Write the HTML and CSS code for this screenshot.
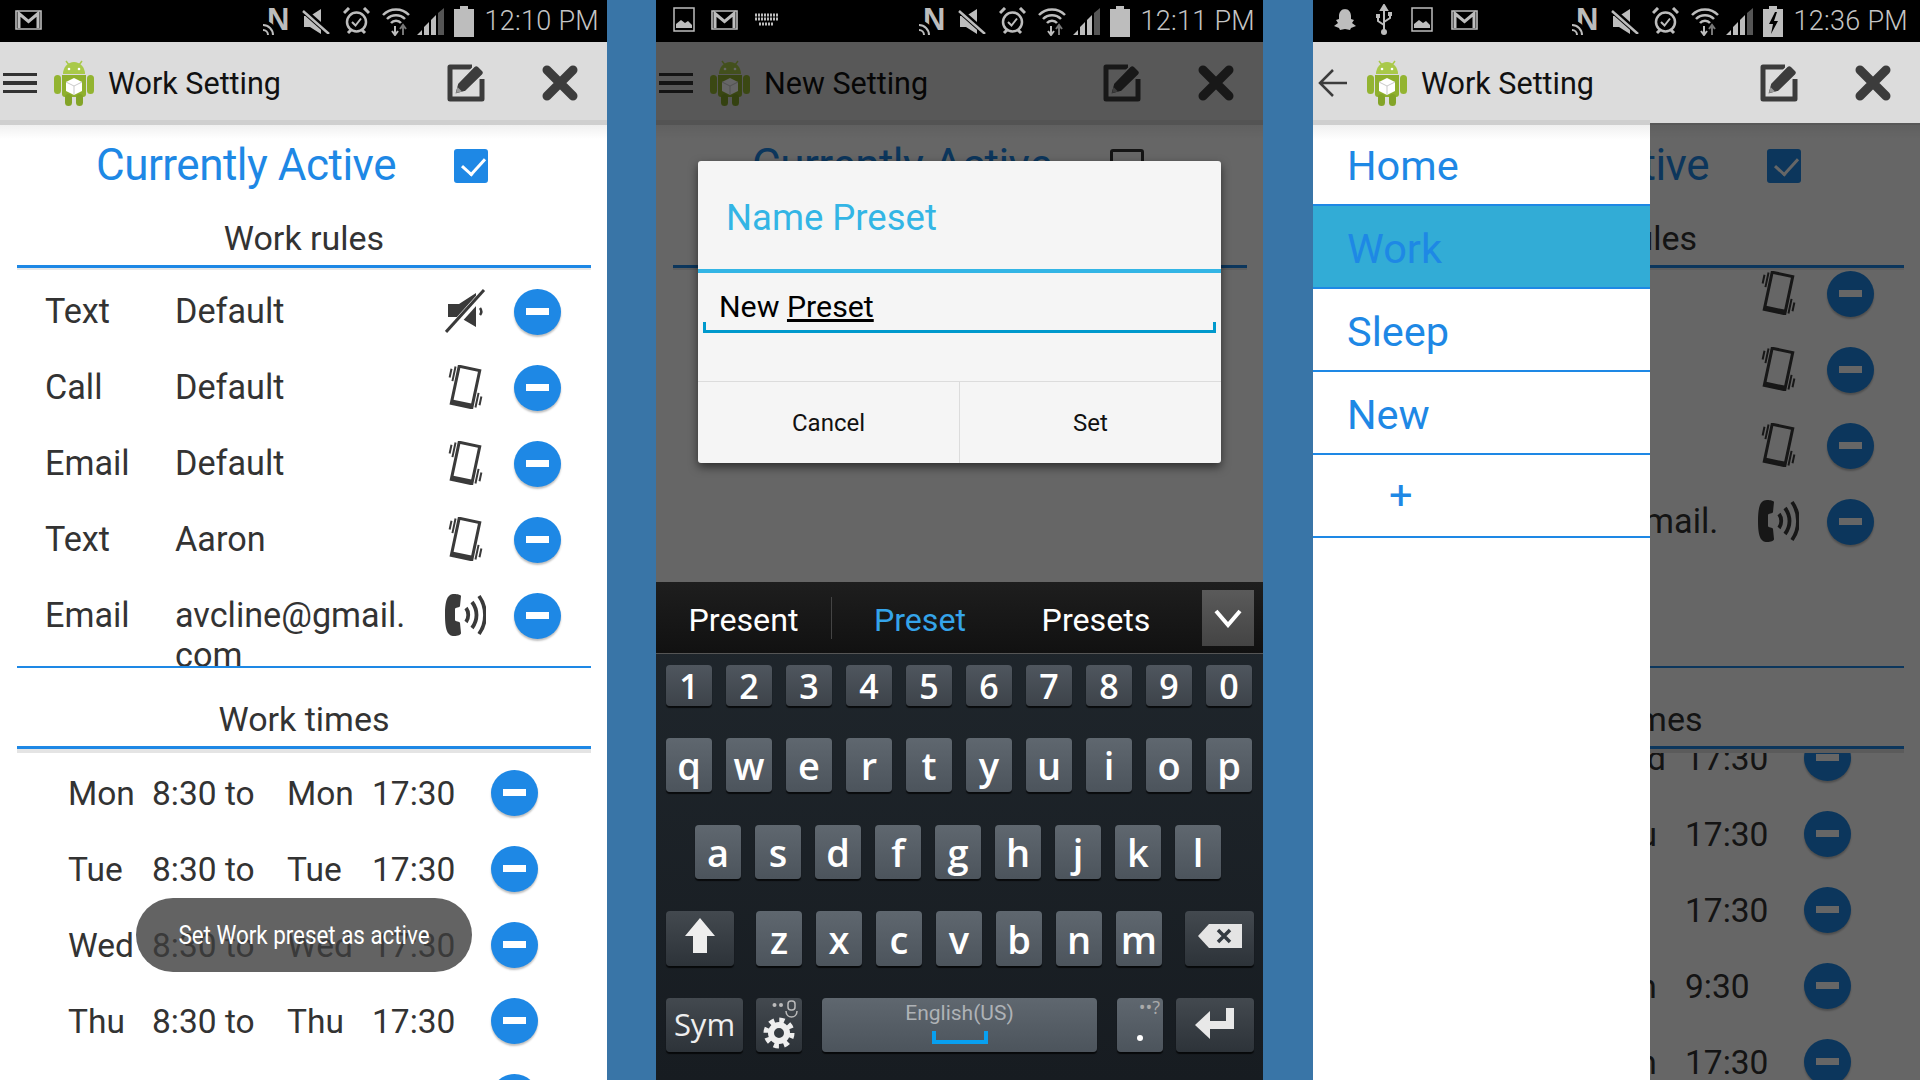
FILE: index.html
```html
<!DOCTYPE html>
<html lang="en">
<head>
    <meta charset="UTF-8">
    <title>Work Setting</title>
    <link rel="stylesheet" href="styles.css">
</head>
<body>
    <svg class="sprite" xmlns="http://www.w3.org/2000/svg">
        <symbol id="i-gmail" viewBox="0 0 27 20">
            <path d="M1 1h25v18H1z" fill="none" stroke="#bdbdbd" stroke-width="1.6"/>
            <path d="M4 18V3.500l9.500 8 9.500-8V18" fill="none" stroke="#bdbdbd" stroke-width="3"/>
        </symbol>
        <symbol id="i-image" viewBox="0 0 22 25">
            <path d="M1 1h20v23H1z" fill="none" stroke="#bdbdbd" stroke-width="1.500"/>
            <path d="M3 21v-4l5-4 4 3 3-2 4 4v3z" fill="#bdbdbd"/>
        </symbol>
        <symbol id="i-keys" viewBox="0 0 25 14">
            <path d="M1 2h23M1 6h23M5 11h15" stroke="#bdbdbd" stroke-width="3" stroke-dasharray="2 1" fill="none"/>
        </symbol>
        <symbol id="i-ghost" viewBox="0 0 25 26">
            <path d="M12.500 2c4.500 0 6.500 3.500 6.500 7v3l3 1-2 3 4 3-5 2-1 2-5-1-5 1-1-2-5-2 4-3-2-3 3-1V9c0-3.500 2-7 6.500-7z" fill="#bdbdbd"/>
        </symbol>
        <symbol id="i-usb" viewBox="0 0 18 32">
            <path d="M9 1l3 5H6zM9 5v23" stroke="#bdbdbd" stroke-width="2" fill="#bdbdbd"/>
            <circle cx="9" cy="28" r="3" fill="#bdbdbd"/>
            <path d="M9 21l-6-4v-4M9 18l6-4v-3" stroke="#bdbdbd" stroke-width="2" fill="none"/>
            <rect x="1" y="10" width="4" height="4" fill="#bdbdbd"/>
            <rect x="13" y="8" width="4" height="4" fill="#bdbdbd"/>
        </symbol>
        <symbol id="i-nfc" viewBox="0 0 26 30">
            <text x="4" y="24" font-family="Liberation Sans" font-weight="700" font-size="31" fill="#bdbdbd">N</text>
            <path d="M0 18a11 11 0 0 1 11 11" stroke="#000" stroke-width="7" fill="none"/>
            <path d="M0 19a10 10 0 0 1 10 10M0 24a5 5 0 0 1 5 5" stroke="#bdbdbd" stroke-width="2" fill="none"/>
        </symbol>
        <symbol id="i-mute" viewBox="0 0 28 25">
            <path d="M2 7h6l11-7v25l-11-7H2z" fill="#bdbdbd"/>
            <path d="M1 1l26 23" stroke="#000" stroke-width="6"/>
            <path d="M1 2l26 23" stroke="#bdbdbd" stroke-width="2.500"/>
        </symbol>
        <symbol id="i-alarm" viewBox="0 0 27 28">
            <circle cx="13.500" cy="15" r="9.500" fill="none" stroke="#bdbdbd" stroke-width="2.500"/>
            <path d="M9 15l3.500 3.500 5.500-7" fill="none" stroke="#bdbdbd" stroke-width="2"/>
            <path d="M1 6l5-5M26 6l-5-5M5 26l3-3M22 26l-3-3" stroke="#bdbdbd" stroke-width="3"/>
        </symbol>
        <symbol id="i-wifi" viewBox="0 0 28 30">
            <path d="M1 9a18 18 0 0 1 26 0M5 13a12.500 12.500 0 0 1 18 0M9 17a6.500 6.500 0 0 1 10 0" fill="none" stroke="#bdbdbd" stroke-width="2.500"/>
            <path d="M13 20v8M10 25l3 4 3-4" fill="none" stroke="#bdbdbd" stroke-width="2"/>
            <path d="M21 29v-9M18 23l3-4 3 4" fill="none" stroke="#777" stroke-width="2"/>
        </symbol>
        <symbol id="i-signal" viewBox="0 0 27 27">
            <path d="M0 27l5-5v5zM7 27V19l5-5v13z" fill="#bdbdbd"/>
            <path d="M14 27V12l5-5v20z" fill="#bdbdbd"/>
            <path d="M21 27V5l6-5v27z" fill="#555"/>
        </symbol>
        <symbol id="i-batt" viewBox="0 0 20 31">
            <path d="M6 0h8v3h6v28H0V3h6z" fill="#bdbdbd"/>
        </symbol>
        <symbol id="i-charge" viewBox="0 0 20 31">
            <path d="M6 0h8v3h6v28H0V3h6z" fill="#bdbdbd"/>
            <path d="M12 6l-6 12h4l-2 10 7-13h-4l3-9z" fill="#000"/>
        </symbol>
        <symbol id="i-android" viewBox="0 0 40 46">
            <path d="M9 14a11 12 0 0 1 22 0z" fill="#a9c94a"/>
            <path d="M12 1l3 4M28 1l-3 4" stroke="#a9c94a" stroke-width="1.500"/>
            <circle cx="15" cy="9" r="1.300" fill="#fff"/>
            <circle cx="25" cy="9" r="1.300" fill="#fff"/>
            <path d="M8 15h24v19a3 3 0 0 1-3 3H11a3 3 0 0 1-3-3z" fill="#8fb02e"/>
            <rect y="15" width="7" height="19" rx="3.500" fill="#93b431"/>
            <rect x="33" y="15" width="7" height="19" rx="3.500" fill="#93b431"/>
            <rect x="11" y="34" width="7" height="12" rx="3.500" fill="#83a428"/>
            <rect x="22" y="34" width="7" height="12" rx="3.500" fill="#83a428"/>
            <path d="M20 18l8 4v9l-8 4-8-4v-9z" fill="#fff"/>
            <path d="M12 22l8 4 8-4M20 26v9" fill="none" stroke="#c9c9c9" stroke-width="1"/>
        </symbol>
        <symbol id="i-edit" viewBox="0 0 38 38">
            <path d="M25 3H3v32h32V15" fill="none" stroke="#3c3c3c" stroke-width="5" stroke-linejoin="round"/>
            <path d="M7.500 30.500l3-11L27 2.500c1.500-1.500 3-1.500 4.500 0l4 4c1.500 1.500 1.500 3 0 4.500L18.500 27.500z" fill="#3c3c3c" stroke="#dcdcdc" stroke-width="1.500"/>
            <path d="M9 29l1.500-6 4.500 4.500z" fill="#9a9a9a"/>
        </symbol>
        <symbol id="i-close" viewBox="0 0 36 36">
            <path d="M5 5l26 26M31 5L5 31" stroke="#3c3c3c" stroke-width="9" stroke-linecap="round"/>
        </symbol>
        <symbol id="i-back" viewBox="0 0 30 30">
            <path d="M29 15H3M15 2L2 15l13 13" fill="none" stroke="#3c3c3c" stroke-width="2.500"/>
        </symbol>
        <symbol id="i-silent" viewBox="0 0 41 44">
            <path d="M3 15h11L31 4v34L14 28H3z" fill="#3a3a3a"/>
            <path d="M35 19c1.500 2 1.500 5 0 7" fill="none" stroke="#3a3a3a" stroke-width="2.500"/>
            <path d="M3 43L40 2" stroke="#fff" stroke-width="7"/>
            <path d="M1 43L39 1" stroke="#3a3a3a" stroke-width="3"/>
        </symbol>
        <symbol id="i-vibrate" viewBox="0 0 41 44">
            <g transform="rotate(12 20.500 22)">
                <rect x="10" y="3" width="21" height="38" fill="none" stroke="#3a3a3a" stroke-width="3"/>
                <rect x="10" y="37" width="21" height="4" fill="#3a3a3a"/>
                <path d="M6.500 4v15M3 7v9M34.500 25v15M38 28v9" stroke="#3a3a3a" stroke-width="2" fill="none"/>
            </g>
        </symbol>
        <symbol id="i-ring" viewBox="0 0 41 44">
            <path d="M9 1C3 1 0 6 0 22s3 21 9 21c4 0 7-1 7-3l-1-10c0-2-5-1-5-3V16c0-2 5-1 5-3l1-10c0-1-3-2-7-2z" fill="#3a3a3a"/>
            <path d="M21 15c3 4 3 10 0 14M27 9c6 8 6 18 0 26M34 3c8 11 8 27 0 38" fill="none" stroke="#3a3a3a" stroke-width="3.800"/>
        </symbol>
        <symbol id="i-chev" viewBox="0 0 30 20">
            <path d="M3 3l12 14L27 3" fill="none" stroke="#fff" stroke-width="4"/>
        </symbol>
        <symbol id="i-shift" viewBox="0 0 32 36">
            <path d="M16 1l15 18H23v17H9V19H1z" fill="#eee"/>
        </symbol>
        <symbol id="i-del" viewBox="0 0 46 26">
            <path d="M12 1h33v24H12L1 13z" fill="#e4e4e4"/>
            <path d="M21 7l12 12M33 7L21 19" stroke="#333a41" stroke-width="3.500"/>
        </symbol>
        <symbol id="i-enter" viewBox="0 0 42 36">
            <path d="M36 4v17H14" fill="none" stroke="#e8e8e8" stroke-width="8"/>
            <path d="M1 21l15-14v28z" fill="#e8e8e8"/>
        </symbol>
        <symbol id="i-gear" viewBox="0 0 32 32">
            <circle cx="16" cy="16" r="12.500" fill="none" stroke="#eee" stroke-width="6" stroke-dasharray="5 4.800"/>
            <circle cx="16" cy="16" r="8" fill="none" stroke="#eee" stroke-width="6"/>
        </symbol>
        <symbol id="i-mic" viewBox="0 0 26 20">
            <circle cx="2.500" cy="5" r="2" fill="#bbb"/>
            <circle cx="9" cy="5" r="2" fill="#bbb"/>
            <rect x="16" y="1" width="7" height="9" rx="3" fill="none" stroke="#bbb" stroke-width="1.500"/>
            <path d="M14 11c0 8 11 8 11 0" fill="none" stroke="#bbb" stroke-width="1.500"/>
        </symbol>
    </svg>

    <!-- first phone: work preset with toast -->
    <section class="phone">
        <div class="status">
            <div class="status-left"><svg class="st-gmail"><use href="#i-gmail"/></svg></div>
            <div class="status-right">
                <svg class="st-nfc"><use href="#i-nfc"/></svg>
                <svg class="st-mute"><use href="#i-mute"/></svg>
                <svg class="st-alarm"><use href="#i-alarm"/></svg>
                <svg class="st-wifi"><use href="#i-wifi"/></svg>
                <svg class="st-signal"><use href="#i-signal"/></svg>
                <svg class="st-batt"><use href="#i-batt"/></svg>
                <span class="clock">12:10 PM</span>
            </div>
        </div>
        <div class="action-bar">
            <div class="hamburger"><i></i><i></i><i></i></div>
            <svg class="logo"><use href="#i-android"/></svg>
            <div class="bar-title">Work Setting</div>
            <svg class="bar-edit"><use href="#i-edit"/></svg>
            <svg class="bar-close"><use href="#i-close"/></svg>
        </div>
        <div class="active-row">
            <span class="active-label">Currently Active</span>
            <span class="check on"></span>
        </div>
        <div class="section-title">Work rules</div>
        <div class="rule-list">
            <div class="rule-row"><span>Text</span><span>Default</span><svg class="rule-icon"><use href="#i-silent"/></svg><span class="minus"></span></div>
            <div class="rule-row"><span>Call</span><span>Default</span><svg class="rule-icon"><use href="#i-vibrate"/></svg><span class="minus"></span></div>
            <div class="rule-row"><span>Email</span><span>Default</span><svg class="rule-icon"><use href="#i-vibrate"/></svg><span class="minus"></span></div>
            <div class="rule-row"><span>Text</span><span>Aaron</span><svg class="rule-icon"><use href="#i-vibrate"/></svg><span class="minus"></span></div>
            <div class="rule-row"><span>Email</span><span>avcline@gmail.<br>com</span><svg class="rule-icon"><use href="#i-ring"/></svg><span class="minus"></span></div>
        </div>
        <div class="section-title times-title">Work times</div>
        <div class="time-list">
            <div class="time-row"><span>Mon</span><span>8:30 to</span><span>Mon</span><span>17:30</span><span class="minus"></span></div>
            <div class="time-row"><span>Tue</span><span>8:30 to</span><span>Tue</span><span>17:30</span><span class="minus"></span></div>
            <div class="time-row"><span>Wed</span><span>8:30 to</span><span>Wed</span><span>17:30</span><span class="minus"></span></div>
            <div class="time-row"><span>Thu</span><span>8:30 to</span><span>Thu</span><span>17:30</span><span class="minus"></span></div>
            <div class="time-row"><span>Fri</span><span>8:30 to</span><span>Fri</span><span>17:30</span><span class="minus"></span></div>
        </div>
        <div class="toast"><span class="toast-text">Set Work preset as active</span></div>
    </section>

    <!-- second phone: name dialog and keyboard -->
    <section class="phone">
        <div class="status">
            <div class="status-left left-three">
                <svg class="st-image"><use href="#i-image"/></svg>
                <svg class="st-gmail"><use href="#i-gmail"/></svg>
                <svg class="st-keys"><use href="#i-keys"/></svg>
            </div>
            <div class="status-right">
                <svg class="st-nfc"><use href="#i-nfc"/></svg>
                <svg class="st-mute"><use href="#i-mute"/></svg>
                <svg class="st-alarm"><use href="#i-alarm"/></svg>
                <svg class="st-wifi"><use href="#i-wifi"/></svg>
                <svg class="st-signal"><use href="#i-signal"/></svg>
                <svg class="st-batt"><use href="#i-batt"/></svg>
                <span class="clock">12:11 PM</span>
            </div>
        </div>
        <div class="action-bar">
            <div class="hamburger"><i></i><i></i><i></i></div>
            <svg class="logo"><use href="#i-android"/></svg>
            <div class="bar-title">New Setting</div>
            <svg class="bar-edit"><use href="#i-edit"/></svg>
            <svg class="bar-close"><use href="#i-close"/></svg>
        </div>
        <div class="active-row">
            <span class="active-label">Currently Active</span>
            <span class="check"></span>
        </div>
        <div class="section-title">New rules</div>
        <div class="dim dim-all"></div>
        <div class="dialog">
            <div class="dialog-head">Name Preset</div>
            <div class="dialog-body">
                <div class="dialog-input">New <u>Preset</u></div>
            </div>
            <div class="dialog-foot">
                <div class="dialog-btn">Cancel</div>
                <div class="dialog-btn">Set</div>
            </div>
        </div>
        <div class="keyboard">
            <div class="suggest">
                <div class="word divided">Present</div>
                <div class="word picked">Preset</div>
                <div class="word">Presets</div>
                <div class="suggest-more"><svg class="chev"><use href="#i-chev"/></svg></div>
            </div>
            <div class="key-rows">
                <div class="key-row nums">
                    <div class="key">1</div><div class="key">2</div><div class="key">3</div><div class="key">4</div><div class="key">5</div><div class="key">6</div><div class="key">7</div><div class="key">8</div><div class="key">9</div><div class="key">0</div>
                </div>
                <div class="key-row">
                    <div class="key">q</div><div class="key">w</div><div class="key">e</div><div class="key">r</div><div class="key">t</div><div class="key">y</div><div class="key">u</div><div class="key">i</div><div class="key">o</div><div class="key">p</div>
                </div>
                <div class="key-row row-home">
                    <div class="key">a</div><div class="key">s</div><div class="key">d</div><div class="key">f</div><div class="key">g</div><div class="key">h</div><div class="key">j</div><div class="key">k</div><div class="key">l</div>
                </div>
                <div class="key-row row-shift">
                    <div class="key dark k-shift"><svg class="kic-shift"><use href="#i-shift"/></svg></div>
                    <div class="key">z</div><div class="key">x</div><div class="key">c</div><div class="key">v</div><div class="key">b</div><div class="key">n</div><div class="key">m</div>
                    <div class="key dark k-del"><svg class="kic-del"><use href="#i-del"/></svg></div>
                </div>
                <div class="key-row row-space">
                    <div class="key dark k-sym">Sym</div>
                    <div class="key dark k-gear">
                        <svg class="kic-mic"><use href="#i-mic"/></svg>
                        <svg class="kic-gear"><use href="#i-gear"/></svg>
                    </div>
                    <div class="key k-space">
                        <span class="space-lang">English(US)</span>
                        <span class="space-mark"></span>
                    </div>
                    <div class="key k-dot"><span class="dot-hint">••?</span><span class="dot-mark"></span></div>
                    <div class="key dark k-enter"><svg class="kic-enter"><use href="#i-enter"/></svg></div>
                </div>
            </div>
        </div>
    </section>

    <!-- third phone: navigation drawer open -->
    <section class="phone drawer-open">
        <div class="status">
            <div class="status-left left-four">
                <svg class="st-ghost"><use href="#i-ghost"/></svg>
                <svg class="st-usb"><use href="#i-usb"/></svg>
                <svg class="st-image"><use href="#i-image"/></svg>
                <svg class="st-gmail"><use href="#i-gmail"/></svg>
            </div>
            <div class="status-right">
                <svg class="st-nfc"><use href="#i-nfc"/></svg>
                <svg class="st-mute"><use href="#i-mute"/></svg>
                <svg class="st-alarm"><use href="#i-alarm"/></svg>
                <svg class="st-wifi"><use href="#i-wifi"/></svg>
                <svg class="st-signal"><use href="#i-signal"/></svg>
                <svg class="st-batt"><use href="#i-charge"/></svg>
                <span class="clock">12:36 PM</span>
            </div>
        </div>
        <div class="action-bar">
            <svg class="back"><use href="#i-back"/></svg>
            <svg class="logo"><use href="#i-android"/></svg>
            <div class="bar-title">Work Setting</div>
            <svg class="bar-edit"><use href="#i-edit"/></svg>
            <svg class="bar-close"><use href="#i-close"/></svg>
        </div>
        <div class="active-row">
            <span class="active-label">Currently Active</span>
            <span class="check on"></span>
        </div>
        <div class="section-title">Work rules</div>
        <div class="rule-list scrolled">
            <div class="rule-row"><span>Call</span><span>Default</span><svg class="rule-icon"><use href="#i-vibrate"/></svg><span class="minus"></span></div>
            <div class="rule-row"><span>Email</span><span>Default</span><svg class="rule-icon"><use href="#i-vibrate"/></svg><span class="minus"></span></div>
            <div class="rule-row"><span>Text</span><span>Aaron</span><svg class="rule-icon"><use href="#i-vibrate"/></svg><span class="minus"></span></div>
            <div class="rule-row"><span>Email</span><span>avcline@gmail.<br>com</span><svg class="rule-icon"><use href="#i-ring"/></svg><span class="minus"></span></div>
        </div>
        <div class="section-title times-title">Work times</div>
        <div class="time-list scrolled">
            <div class="time-row"><span>Wed</span><span>8:30 to</span><span>Wed</span><span>17:30</span><span class="minus"></span></div>
            <div class="time-row"><span>Thu</span><span>8:30 to</span><span>Thu</span><span>17:30</span><span class="minus"></span></div>
            <div class="time-row"><span>Fri</span><span>8:30 to</span><span>Fri</span><span>17:30</span><span class="minus"></span></div>
            <div class="time-row"><span>Sun</span><span>8:30 to</span><span>Sun</span><span>9:30</span><span class="minus"></span></div>
            <div class="time-row"><span>Sun</span><span>12:30 to</span><span>Sun</span><span>17:30</span><span class="minus"></span></div>
        </div>
        <div class="dim dim-below"></div>
        <nav class="drawer">
            <div class="drawer-item">Home</div>
            <div class="drawer-item current">Work</div>
            <div class="drawer-item">Sleep</div>
            <div class="drawer-item">New</div>
            <div class="drawer-item add">+</div>
        </nav>
    </section>
</body>
</html>
```

FILE: styles.css
```css
* {
    box-sizing: border-box;
}
html, body {
    height: 100%;
}
body {
    margin: 0;
    background: #3975a7;
    display: flex;
    gap: 49px;
    overflow: hidden;
    font-family: Roboto, "Liberation Sans", sans-serif;
    color: #333;
}
.sprite {
    position: absolute;
    width: 0;
    height: 0;
}
.phone {
    position: relative;
    flex: none;
    width: 607px;
    height: 1080px;
    background: #fff;
    overflow: hidden;
}
.phone.drawer-open {
    margin-left: auto;
}

/* status bar */
.status {
    position: relative;
    z-index: 5;
    height: 42px;
    background: #000;
    display: flex;
    justify-content: space-between;
    align-items: center;
}
.status-left {
    display: flex;
    align-items: center;
    padding-left: 15px;
    margin-top: -3px;
}
.left-three {
    padding-left: 17px;
    gap: 16px;
}
.left-four {
    padding-left: 19px;
    gap: 18px;
}
.status-right {
    display: flex;
    align-items: center;
    gap: 12px;
    padding-right: 8px;
}
.drawer-open .status-right {
    padding-right: 12px;
}
.st-gmail { width: 27px; height: 20px; }
.st-image { width: 22px; height: 25px; }
.st-keys { width: 25px; height: 14px; }
.st-ghost { width: 25px; height: 26px; }
.st-usb { width: 18px; height: 32px; }
.st-nfc { width: 26px; height: 30px; }
.st-mute { width: 28px; height: 25px; margin-left: 1px; }
.st-alarm { width: 27px; height: 28px; margin-left: 1px; }
.st-wifi { width: 28px; height: 30px; }
.st-signal { width: 27px; height: 27px; margin-left: -5px; }
.st-batt { width: 20px; height: 31px; margin-left: -2px; }
.clock {
    margin-left: -2px;
    font-size: 27px;
    font-weight: 300;
    color: #c4c4c4;
    letter-spacing: 0.3px;
    white-space: nowrap;
}

/* action bar */
.action-bar {
    position: relative;
    height: 83px;
    padding: 4px 0 0 3px;
    background: #dcdcdc;
    border-bottom: 5px solid #cfcfcf;
    display: flex;
    align-items: center;
}
.action-bar::after {
    content: "";
    position: absolute;
    left: 0;
    right: 0;
    top: 83px;
    height: 14px;
    background: linear-gradient(#f0f0f0, #fff);
}
.drawer-open .action-bar {
    border-bottom-color: #dcdcdc;
}
.hamburger {
    width: 34px;
    display: flex;
    flex-direction: column;
    gap: 5px;
}
.hamburger i {
    display: block;
    height: 3.500px;
    background: #333;
}
.back {
    width: 30px;
    height: 30px;
    margin: 0 2px;
}
.logo {
    width: 40px;
    height: 46px;
    margin-left: 17px;
}
.bar-title {
    margin-left: 14px;
    font-size: 30.500px;
    color: #111;
    width: 339px;
    white-space: nowrap;
}
.bar-edit {
    width: 38px;
    height: 38px;
}
.bar-close {
    width: 36px;
    height: 36px;
    margin-left: 57px;
}

/* top of the form */
.active-row {
    height: 80px;
    padding: 0 119px 0 96px;
    display: flex;
    align-items: center;
    justify-content: space-between;
}
.active-label {
    font-size: 44px;
    letter-spacing: -0.5px;
    color: #1e88e5;
}
.check {
    position: relative;
    width: 34px;
    height: 34px;
    border-radius: 3px;
    border: 3px solid #333;
    margin-top: 2px;
}
.check.on {
    background: #1e88e5;
    border-color: #1e88e5;
}
.check.on::after {
    content: "";
    position: absolute;
    left: 4px;
    top: 2px;
    width: 19px;
    height: 11px;
    border-left: 3px solid #fff;
    border-bottom: 3px solid #fff;
    transform: rotate(-48deg) translate(-1px, 3px);
}
.section-title {
    position: relative;
    height: 63px;
    margin: 0 16px 0 17px;
    padding-bottom: 7px;
    display: flex;
    align-items: flex-end;
    justify-content: center;
    font-size: 34px;
    border-bottom: 3px solid #1e88e5;
    box-shadow: 0 2px 0 #e8e8e8;
    background: #fff;
    z-index: 1;
}
.times-title {
    height: 81px;
    box-shadow: 0 4px 0 #e4e4e4;
}

/* rows */
.rule-list {
    position: relative;
    height: 400px;
    padding-top: 2px;
    overflow: hidden;
}
.rule-list::after {
    content: "";
    position: absolute;
    left: 17px;
    right: 16px;
    bottom: 0;
    height: 2px;
    background: #1e88e5;
}
.rule-row {
    height: 76px;
    padding: 21px 0 0 45px;
    display: grid;
    grid-template-columns: 130px 270px 69px 47px;
    align-items: start;
    font-size: 34.200px;
    line-height: 40px;
}
.rule-icon {
    width: 41px;
    height: 44px;
    margin-top: -2px;
}
.rule-list.scrolled {
    padding-top: 0;
}
.rule-list.scrolled .rule-row:first-child {
    margin-top: -16px;
}
.time-list {
    padding-top: 6px;
}
.time-list.scrolled {
    padding-top: 0;
}
.time-list.scrolled .time-row:first-child {
    margin-top: -29px;
}
.time-row {
    height: 76px;
    padding-left: 68px;
    display: grid;
    grid-template-columns: 84px 135px 85px 119px 47px;
    align-items: center;
    font-size: 33.500px;
    white-space: nowrap;
}
.minus {
    position: relative;
    width: 47px;
    height: 46px;
    border-radius: 50%;
    background: #1e88e5;
    box-shadow: 0 2px 2px rgba(0, 0, 0, 0.25);
}
.minus::after {
    content: "";
    position: absolute;
    left: 12px;
    top: 19px;
    width: 23px;
    height: 7px;
    background: #fff;
}
.rule-row .minus {
    margin-top: -2px;
}
.toast {
    position: absolute;
    left: 136px;
    top: 898px;
    width: 336px;
    height: 74px;
    border-radius: 37px;
    background: rgba(60, 60, 60, 0.8);
    color: #fff;
    display: flex;
    align-items: center;
    justify-content: center;
}
.toast-text {
    font-size: 26px;
    white-space: nowrap;
    transform: scaleX(0.86);
}

/* dim layers */
.dim {
    position: absolute;
    left: 0;
    right: 0;
    bottom: 0;
    background: rgba(0, 0, 0, 0.6);
    z-index: 2;
}
.dim-all {
    top: 42px;
}
.dim-below {
    top: 123px;
}

/* dialog */
.dialog {
    position: absolute;
    left: 42px;
    top: 161px;
    width: 523px;
    height: 302px;
    border-radius: 3px;
    background: #f5f5f5;
    box-shadow: 0 4px 10px rgba(0, 0, 0, 0.55);
    z-index: 3;
    display: flex;
    flex-direction: column;
}
.dialog-head {
    height: 112px;
    padding: 5px 0 0 28px;
    display: flex;
    align-items: center;
    font-size: 36.500px;
    color: #33b5e5;
    border-bottom: 4px solid #33b5e5;
}
.dialog-body {
    height: 108px;
    padding: 0 5px;
}
.dialog-input {
    position: relative;
    height: 60px;
    padding: 16px 0 0 16px;
    font-size: 30.300px;
    line-height: 35px;
    color: #000;
    border-bottom: 3px solid #0099cc;
}
.dialog-input::before,
.dialog-input::after {
    content: "";
    position: absolute;
    bottom: 0;
    width: 3px;
    height: 8px;
    background: #0099cc;
}
.dialog-input::before {
    left: 0;
}
.dialog-input::after {
    right: 0;
}
.dialog-foot {
    flex: 1;
    display: flex;
    border-top: 1px solid #dcdcdc;
}
.dialog-btn {
    flex: 1;
    display: flex;
    align-items: center;
    justify-content: center;
    font-size: 24px;
    color: #111;
}
.dialog-btn + .dialog-btn {
    border-left: 1px solid #dcdcdc;
}

/* keyboard */
.keyboard {
    position: absolute;
    left: 0;
    right: 0;
    top: 582px;
    bottom: 0;
    z-index: 3;
    background: linear-gradient(#20272d, #171c21);
}
.suggest {
    height: 72px;
    display: flex;
    align-items: center;
    background: linear-gradient(#1e1e1e, #111);
    border-bottom: 1px solid #555;
}
.word {
    width: 176px;
    padding-top: 4px;
    text-align: center;
    font-size: 32.200px;
    color: #fff;
}
.word.divided {
    border-right: 1px solid #444;
}
.word.picked {
    color: #35a4ea;
}
.suggest-more {
    width: 52px;
    height: 56px;
    margin-left: 18px;
    background: linear-gradient(#5a5a5a, #444);
    display: flex;
    align-items: center;
    justify-content: center;
}
.chev {
    width: 30px;
    height: 20px;
}
.key-rows {
    padding: 11px 9px 0 10px;
    display: flex;
    flex-direction: column;
    gap: 32px;
}
.key-row {
    display: flex;
    gap: 14px;
    height: 54px;
}
.key-row.nums {
    height: 41px;
}
.row-home {
    padding-left: 29px;
    margin-top: 1px;
}
.row-shift {
    height: 55px;
}
.key {
    position: relative;
    width: 46px;
    border-radius: 4px;
    background: linear-gradient(#5f676f, #4c545c);
    box-shadow: 0 2px 1px rgba(0, 0, 0, 0.7);
    display: flex;
    align-items: center;
    justify-content: center;
    font-family: "Open Sans", "Noto Sans", sans-serif;
    font-size: 38px;
    font-weight: 600;
    color: #fff;
}
.nums .key {
    background: linear-gradient(#4f565e, #3d434a);
    font-size: 34px;
}
.key.dark {
    background: linear-gradient(#43494f, #2d3339);
}
.k-shift {
    width: 68px;
    margin-right: 8px;
}
.k-del {
    width: 69px;
    margin-left: 9px;
}
.k-sym {
    width: 77px;
    margin-right: -1px;
    padding-bottom: 3px;
    font-size: 31px;
    font-weight: 400;
    color: #eee;
}
.k-gear {
    margin-right: 6px;
}
.k-space {
    width: 275px;
    margin-right: 6px;
}
.k-enter {
    width: 78px;
    margin-left: -1px;
}
.kic-shift { width: 32px; height: 36px; margin-top: -7px; }
.kic-del { width: 46px; height: 26px; margin-top: -6px; }
.kic-enter { width: 42px; height: 36px; margin-top: -6px; }
.kic-mic {
    position: absolute;
    right: 4px;
    top: 2px;
    width: 26px;
    height: 20px;
}
.kic-gear {
    position: absolute;
    left: 7px;
    bottom: 3px;
    width: 32px;
    height: 32px;
}
.space-lang {
    position: absolute;
    top: 3px;
    left: 0;
    right: 0;
    text-align: center;
    font-family: Roboto, sans-serif;
    font-size: 21px;
    font-weight: 400;
    color: #aeb2b6;
}
.space-mark {
    position: absolute;
    left: 110px;
    bottom: 8px;
    width: 56px;
    height: 13px;
    border: 4px solid #08a0f0;
    border-top: 0;
}
.dot-hint {
    position: absolute;
    right: 3px;
    top: -3px;
    font-size: 18px;
    font-weight: 400;
    color: #aaa;
}
.dot-mark {
    width: 6px;
    height: 6px;
    margin-top: 26px;
    border-radius: 50%;
    background: #fff;
}

/* drawer */
.drawer {
    position: absolute;
    left: 0;
    top: 120px;
    bottom: 0;
    width: 337px;
    padding-top: 3px;
    background: #fff;
    z-index: 3;
}
.drawer::before {
    content: "";
    position: absolute;
    left: 0;
    right: 0;
    top: 0;
    height: 20px;
    background: linear-gradient(#cfcfcf 5px, #f0f0f0 5px, #fff);
}
.drawer-item {
    position: relative;
    height: 83px;
    padding: 3px 0 0 34px;
    display: flex;
    align-items: center;
    font-size: 41.500px;
    color: #1e88e5;
    border-bottom: 2px solid #1e88e5;
}
.drawer-item.current {
    background: #32acd6;
}
.drawer-item.add {
    padding: 0 0 2px 76px;
}
```
